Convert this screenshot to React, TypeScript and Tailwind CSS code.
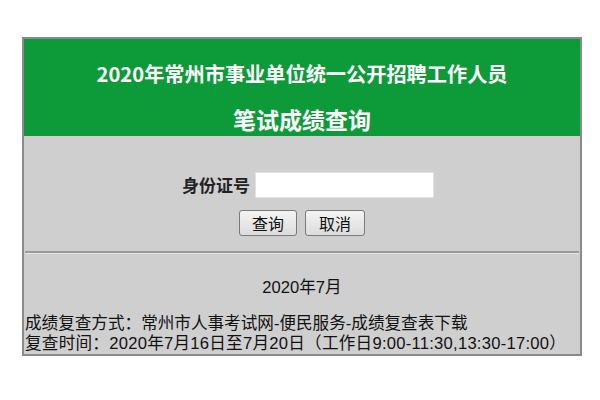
import React from 'react';

const font = { fontFamily: '"Noto Sans CJK SC", "Noto Sans", sans-serif' };
const footFont = { fontFamily: '"Liberation Sans", "Noto Sans CJK SC", sans-serif' };

export default function App() {
  return (
    <div className="w-[600px] h-[400px] bg-white pt-[37px]" style={font}>
      <div className="mx-[22px] w-[560px] border-2 border-[#8a8a8a] bg-[#cfcfcf]">
        {/* Header */}
        <div className="bg-[#0d9a38] h-[97px] flex flex-col items-center text-white font-bold">
          <div className="text-[20.2px] leading-none mt-[25px]">2020年常州市事业单位统一公开招聘工作人员</div>
          <div className="text-[23px] leading-none mt-[24px]">笔试成绩查询</div>
        </div>

        {/* Query form */}
        <div className="flex flex-col items-center pt-[36px] pb-[15px]">
          <div className="flex items-center gap-[5px] pl-[12px]">
            <span className="text-[17px] text-[#222] font-bold">身份证号</span>
            <input className="w-[179px] h-[26px] bg-white border border-[#e2e2e2] outline-none px-1" />
          </div>
          <div className="flex gap-[8px] mt-[12px]">
            <button className="w-[58px] h-[26px] rounded-[3px] border border-[#7a7a7a] bg-gradient-to-b from-[#f4f4f4] to-[#dcdcdc] text-[16px] leading-none text-[#111]">查询</button>
            <button className="w-[60px] h-[26px] rounded-[3px] border border-[#7a7a7a] bg-gradient-to-b from-[#f4f4f4] to-[#dcdcdc] text-[16px] leading-none text-[#111]">取消</button>
          </div>
        </div>

        <div className="mx-[1px] border-t-2 border-[#9a9a9a] border-b border-b-[#e6e6e6]" />

        {/* Footer info */}
        <div className="text-[#111] text-[16.6px] leading-[20px]" style={footFont}>
          <div className="text-center mt-[24px] mb-[16px]">2020年7月</div>
          <div className="pl-[1px]">成绩复查方式：常州市人事考试网-便民服务-成绩复查表下载</div>
          <div className="pl-[1px] tracking-[0.25px]">复查时间：2020年7月16日至7月20日（工作日9:00-11:30,13:30-17:00）</div>
        </div>
      </div>
    </div>
  );
}
